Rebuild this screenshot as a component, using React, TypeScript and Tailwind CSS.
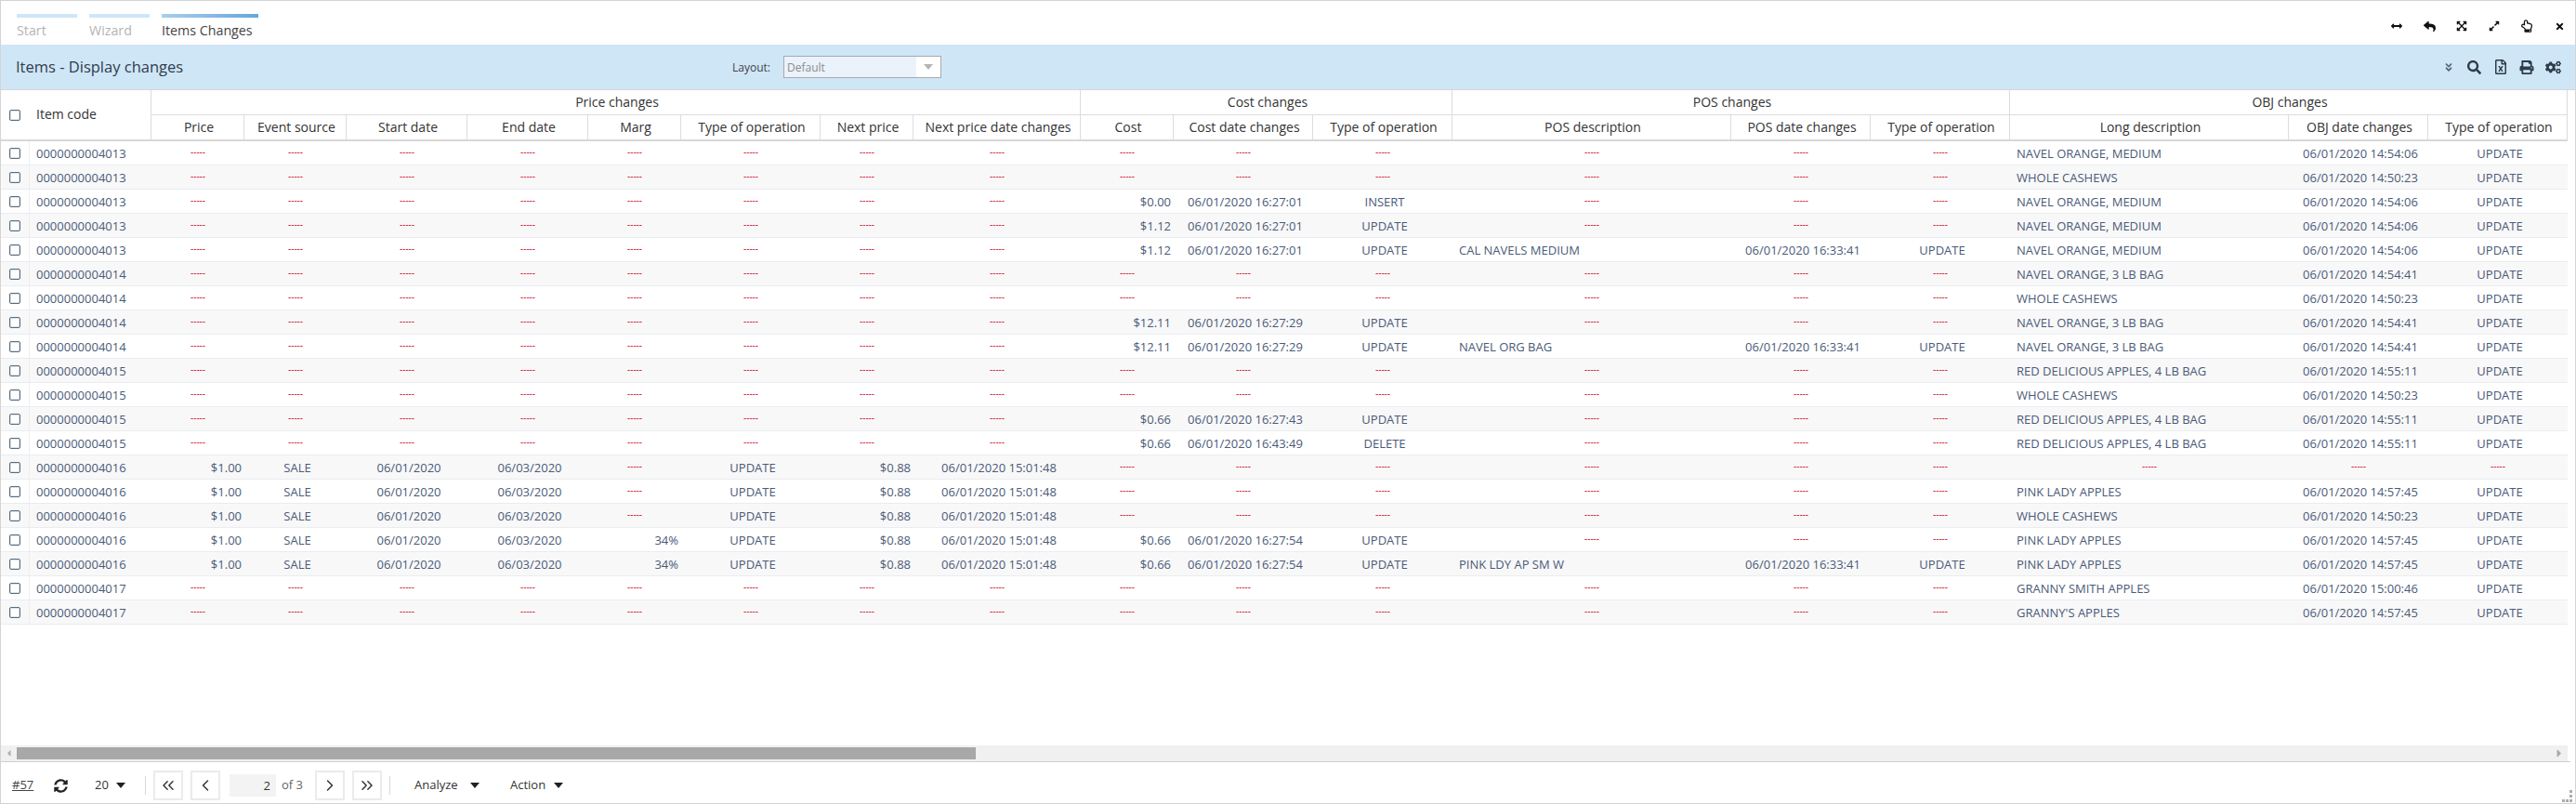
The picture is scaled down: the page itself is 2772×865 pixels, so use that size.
import {
  FaAngleDoubleDown,
  FaArrowsAltH,
  FaCaretLeft,
  FaCaretRight,
  FaCogs,
  FaExpandAlt,
  FaExpandArrowsAlt,
  FaPrint,
  FaRegFileExcel,
  FaRegHandPointUp,
  FaReply,
  FaSearch,
  FaSyncAlt,
  FaTimes,
} from "react-icons/fa";
import { ChevronLeft, ChevronRight, ChevronsLeft, ChevronsRight } from "lucide-react";

// same template for header and rows so the columns line up
const gridCols =
  "grid grid-cols-[31px_131px_100px_110px_130px_130px_100px_150px_100px_180px_100px_150px_150px_300px_150px_150px_300px_150px_150px]";

type Align = "l" | "c" | "r";

const aligns: Align[] = ["r", "c", "c", "c", "r", "c", "r", "c", "r", "c", "c", "l", "c", "c", "l", "c", "c"];

const subHeaders = [
  "Price",
  "Event source",
  "Start date",
  "End date",
  "Marg",
  "Type of operation",
  "Next price",
  "Next price date changes",
  "Cost",
  "Cost date changes",
  "Type of operation",
  "POS description",
  "POS date changes",
  "Type of operation",
  "Long description",
  "OBJ date changes",
  "Type of operation",
];

const D = "";
const d3 = [D, D, D];
const d8 = [D, D, D, D, D, D, D, D];

const sale = (marg: string) => ["$1.00", "SALE", "06/01/2020", "06/03/2020", marg, "UPDATE", "$0.88", "06/01/2020 15:01:48"];
const cost = (c: string, t: string, op = "UPDATE") => [c, `06/01/2020 ${t}`, op];
const pos = (name: string) => [name, "06/01/2020 16:33:41", "UPDATE"];
const obj = (name: string, t: string) => [name, `06/01/2020 ${t}`, "UPDATE"];

const navel = obj("NAVEL ORANGE, MEDIUM", "14:54:06");
const navel3 = obj("NAVEL ORANGE, 3 LB BAG", "14:54:41");
const red = obj("RED DELICIOUS APPLES, 4 LB BAG", "14:55:11");
const pink = obj("PINK LADY APPLES", "14:57:45");
const cashews = obj("WHOLE CASHEWS", "14:50:23");

const rows: { code: string; cells: string[] }[] = [
  { code: "0000000004013", cells: [...d8, ...d3, ...d3, ...navel] },
  { code: "0000000004013", cells: [...d8, ...d3, ...d3, ...cashews] },
  { code: "0000000004013", cells: [...d8, ...cost("$0.00", "16:27:01", "INSERT"), ...d3, ...navel] },
  { code: "0000000004013", cells: [...d8, ...cost("$1.12", "16:27:01"), ...d3, ...navel] },
  { code: "0000000004013", cells: [...d8, ...cost("$1.12", "16:27:01"), ...pos("CAL NAVELS MEDIUM"), ...navel] },
  { code: "0000000004014", cells: [...d8, ...d3, ...d3, ...navel3] },
  { code: "0000000004014", cells: [...d8, ...d3, ...d3, ...cashews] },
  { code: "0000000004014", cells: [...d8, ...cost("$12.11", "16:27:29"), ...d3, ...navel3] },
  { code: "0000000004014", cells: [...d8, ...cost("$12.11", "16:27:29"), ...pos("NAVEL ORG BAG"), ...navel3] },
  { code: "0000000004015", cells: [...d8, ...d3, ...d3, ...red] },
  { code: "0000000004015", cells: [...d8, ...d3, ...d3, ...cashews] },
  { code: "0000000004015", cells: [...d8, ...cost("$0.66", "16:27:43"), ...d3, ...red] },
  { code: "0000000004015", cells: [...d8, ...cost("$0.66", "16:43:49", "DELETE"), ...d3, ...red] },
  { code: "0000000004016", cells: [...sale(D), ...d3, ...d3, ...d3] },
  { code: "0000000004016", cells: [...sale(D), ...d3, ...d3, ...pink] },
  { code: "0000000004016", cells: [...sale(D), ...d3, ...d3, ...cashews] },
  { code: "0000000004016", cells: [...sale("34%"), ...cost("$0.66", "16:27:54"), ...d3, ...pink] },
  { code: "0000000004016", cells: [...sale("34%"), ...cost("$0.66", "16:27:54"), ...pos("PINK LDY AP SM W"), ...pink] },
  { code: "0000000004017", cells: [...d8, ...d3, ...d3, ...obj("GRANNY SMITH APPLES", "15:00:46")] },
  { code: "0000000004017", cells: [...d8, ...d3, ...d3, ...obj("GRANNY'S APPLES", "14:57:45")] },
];

function Checkbox() {
  return <span className="block w-[12px] h-[12px] rounded-[2px] border border-[#5d6b78] bg-white shadow-[inset_0_0_0_1px_#d5e4f2]" />;
}

function Caret() {
  return <span className="block w-0 h-0 border-x-[5px] border-t-[6px] border-x-transparent border-t-[#222]" />;
}

function Cell({ value, align }: { value: string; align: Align }) {
  if (!value) {
    return (
      <div className="text-center text-[10px] leading-[14px] pt-[4px] text-[#d0021b]">-----</div>
    );
  }
  if (align === "r") return <div className="text-right pr-[3px] leading-[26px] truncate">{value}</div>;
  if (align === "l") return <div className="text-left pl-[7px] leading-[26px] truncate">{value}</div>;
  return <div className="text-center pl-[4px] leading-[26px] truncate">{value}</div>;
}

function GroupHeader({ label, span }: { label: string; span: string }) {
  return (
    <div className={`${span} flex items-center justify-center pl-[3px] border-r border-b border-[#dcdcdc]`}>{label}</div>
  );
}

function Tab({ label, active, bar }: { label: string; active?: boolean; bar: string }) {
  return (
    <div className="flex flex-col">
      <div className={bar} />
      <div className={active ? "mt-[4px] text-[#444] leading-[20px]" : "mt-[4px] text-[#b4b4b4] leading-[20px]"}>{label}</div>
    </div>
  );
}

function PagerButton({ children, left }: { children: React.ReactNode; left: string }) {
  return (
    <div className={`${left} w-[32px] h-[32px] flex items-center justify-center border-2 border-[#ebebeb] text-[#333]`}>
      {children}
    </div>
  );
}

export default function App() {
  return (
    <div className="relative w-[2772px] h-[865px] flex flex-col bg-white border-t border-l border-r border-b border-[#d4d4d4] text-[13px] text-[#333] font-['Open_Sans',sans-serif] overflow-hidden">
      {/* tabs + window icons */}
      <div className="h-[47px] shrink-0 flex items-start pl-[17px] pt-[14px] text-[14.25px]">
        <Tab label="Start" bar="w-[65px] h-[4px] bg-[#cfe6f7]" />
        <div className="w-[13px]" />
        <Tab label="Wizard" bar="w-[65px] h-[4px] bg-[#cfe6f7]" />
        <div className="w-[13px]" />
        <Tab label="Items Changes" active bar="w-[104px] h-[4px] bg-gradient-to-r from-[#a9cfec] to-[#66a5dc]" />
        <div className="ml-auto flex items-center h-[26px] text-[#111]">
          <FaArrowsAltH className="w-[14px] h-[12px]" />
          <FaReply className="ml-[22px] w-[13px] h-[13px]" />
          <FaExpandArrowsAlt className="ml-[22px] w-[12px] h-[12px]" />
          <FaExpandAlt className="ml-[23px] w-[12px] h-[12px]" />
          <FaRegHandPointUp className="ml-[23px] w-[12px] h-[14px]" />
          <FaTimes className="ml-[25px] mr-[12px] w-[9px] h-[11px]" />
        </div>
      </div>

      {/* title bar */}
      <div className="h-[48px] shrink-0 flex items-center bg-[#cfe6f7] pl-[16px]">
        <div className="w-[771px] text-[16.5px] text-[#2f3d4a]">Items - Display changes</div>
        <div className="w-[55px] text-[12px] leading-[18px] pt-[1px] text-[#444]">Layout:</div>
        <div className="w-[170px] h-[24px] flex border border-[#a9a9a9] bg-[#eaf3fb]">
          <div className="flex-1 pl-[3px] text-[12px] leading-[23px] text-[#8c8c8c]">Default</div>
          <div className="w-[26px] flex items-center justify-center bg-white">
            <span className="block w-0 h-0 border-x-[5px] border-t-[6px] border-x-transparent border-t-[#b5b5b5]" />
          </div>
        </div>
        <div className="ml-auto flex items-center text-[#2e3b49]">
          <FaAngleDoubleDown className="w-[10px] h-[11px] text-[#5a6672]" />
          <FaSearch className="ml-[15px] w-[15px] h-[15px]" />
          <FaRegFileExcel className="ml-[14px] w-[14px] h-[16px]" />
          <FaPrint className="ml-[13px] w-[16px] h-[15px]" />
          <FaCogs className="ml-[12px] mr-[15px] w-[17px] h-[15px]" />
        </div>
      </div>

      {/* grid */}
      <div className="flex-1 min-h-0 border-t border-[#d4d4d4]">
        <div className={`${gridCols} grid-rows-[27px_26px] w-[2762px] border-b-2 border-[#d8d8d8] text-[14px] leading-[20px] text-[#333]`}>
          <div className="row-span-2 flex items-center pl-[9px]">
            <Checkbox />
          </div>
          <div className="row-span-2 flex items-center pl-[7px] pb-[2px] border-r border-[#dcdcdc]">Item code</div>
          <GroupHeader label="Price changes" span="col-span-8" />
          <GroupHeader label="Cost changes" span="col-span-3" />
          <GroupHeader label="POS changes" span="col-span-3" />
          <GroupHeader label="OBJ changes" span="col-span-3" />
          {subHeaders.map((label, i) => (
            <div key={i} className="flex items-center justify-center pl-[3px] border-r border-[#dcdcdc] whitespace-nowrap">
              {label}
            </div>
          ))}
        </div>
        <div className="w-[2762px] text-[#4a5a78]">
          {rows.map((row, i) => (
            <div key={i} className={`${gridCols} h-[26px] border-b border-[#eaecf2] ${i % 2 ? "bg-[#f8f8f8]" : "bg-white"}`}>
              <div className="flex items-center pl-[9px] border-r border-[#eeeeee]">
                <Checkbox />
              </div>
              <div className="pl-[7px] leading-[26px]">{row.code}</div>
              {row.cells.map((value, j) => (
                <Cell key={j} value={value} align={aligns[j]} />
              ))}
            </div>
          ))}
        </div>
      </div>

      {/* horizontal scrollbar */}
      <div className="h-[18px] shrink-0 w-[2765px] border-b border-[#d0d0d0]">
        <div className="h-[17px] w-[2762px] flex items-center bg-[#f0f0f0]">
          <FaCaretLeft className="w-[17px] h-[11px] text-[#b0b0b0]" />
          <div className="w-[1032px] h-[13px] bg-[#a8a8a8]" />
          <FaCaretRight className="ml-auto mr-[2px] w-[14px] h-[13px] text-[#a8a8a8]" />
        </div>
      </div>

      {/* footer */}
      <div className="h-[44px] shrink-0 flex items-center pt-[6px] text-[#333]">
        <span className="ml-[12px] w-[23px] underline text-[#444]">#57</span>
        <FaSyncAlt className="ml-[22px] w-[15px] h-[15px] text-[#222]" />
        <span className="ml-[29px] w-[14px]">20</span>
        <span className="ml-[9px]">
          <Caret />
        </span>
        <div className="ml-[21px] w-px h-[20px] bg-[#d8d8d8]" />
        <PagerButton left="ml-[8px]">
          <ChevronsLeft className="w-[20px] h-[20px]" strokeWidth={1.75} />
        </PagerButton>
        <PagerButton left="ml-[8px]">
          <ChevronLeft className="w-[20px] h-[20px]" strokeWidth={1.75} />
        </PagerButton>
        <div className="ml-[10px] w-[50px] h-[24px] bg-[#f3f3f3] text-right pr-[6px] leading-[24px]">2</div>
        <span className="ml-[6px] w-[23px] text-[#666]">of 3</span>
        <PagerButton left="ml-[13px]">
          <ChevronRight className="w-[20px] h-[20px]" strokeWidth={1.75} />
        </PagerButton>
        <PagerButton left="ml-[8px]">
          <ChevronsRight className="w-[20px] h-[20px]" strokeWidth={1.75} />
        </PagerButton>
        <div className="ml-[8px] w-px h-[20px] bg-[#d8d8d8]" />
        <span className="ml-[26px] w-[45px]">Analyze</span>
        <span className="ml-[15px]">
          <Caret />
        </span>
        <span className="ml-[33px] w-[37px]">Action</span>
        <span className="ml-[10px]">
          <Caret />
        </span>
      </div>

      {/* resize grip */}
      <svg className="absolute right-[2px] bottom-0 w-[13px] h-[14px]" viewBox="0 0 13 14">
        <rect x="9" y="0" width="3" height="3" fill="#a6adb5" />
        <rect x="9" y="5" width="3" height="3" fill="#a6adb5" />
        <rect x="1" y="10" width="3" height="3" fill="#b8a99a" />
        <rect x="5" y="10" width="3" height="3" fill="#a6adb5" />
        <rect x="9" y="10" width="3" height="3" fill="#a6adb5" />
      </svg>
    </div>
  );
}
